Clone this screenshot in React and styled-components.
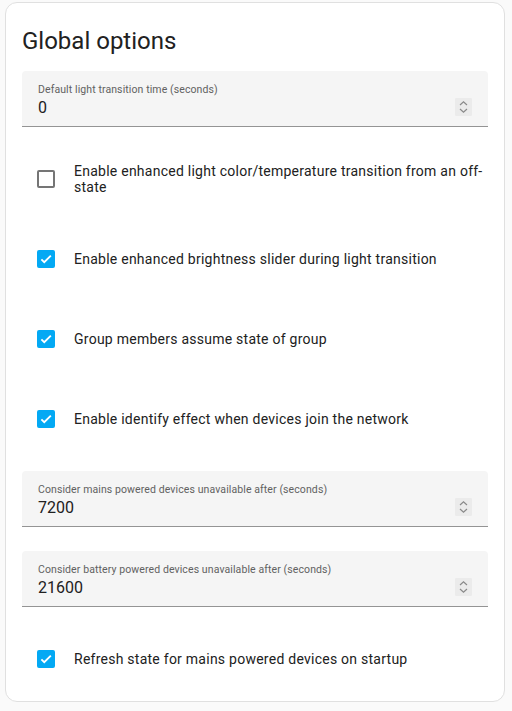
import React from "react";
import styled, { createGlobalStyle } from "styled-components";

const GlobalStyle = createGlobalStyle`
  html, body {
    margin: 0;
    padding: 0;
    background: #fafafa;
    font-family: Roboto, "Noto Sans", sans-serif;
    -webkit-font-smoothing: antialiased;
  }
`;

const Page = styled.div`
  padding: 2px 7px 8px 5px;
`;

const Card = styled.div`
  background: #ffffff;
  border: 1px solid #e0e0e0;
  border-radius: 12px;
  padding: 0 16px 2px 16px;
  display: flex;
  flex-direction: column;
`;

const Title = styled.h1`
  margin: 0;
  padding: 22px 0 2px 0;
  font-size: 24px;
  font-weight: 400;
  line-height: 32px;
  color: #212121;
`;

const Field = styled.div`
  position: relative;
  margin: 12px 0;
  height: 55px;
  background: #f5f5f5;
  border-radius: 4px 4px 0 0;
  border-bottom: 1px solid #949494;
  padding: 0 16px;
  display: flex;
  flex-direction: column;
  justify-content: flex-start;
`;

const FieldLabel = styled.div`
  margin-top: 13px;
  font-size: 10.5px;
  line-height: 12px;
  color: #616161;
  letter-spacing: 0.1px;
`;

const FieldValue = styled.div`
  margin-top: 2px;
  font-size: 16px;
  line-height: 20px;
  color: #212121;
`;

const Spinner = styled.div`
  position: absolute;
  right: 16px;
  top: 27px;
  width: 17px;
  height: 18px;
  background: #ebebeb;
  border-radius: 1px;
  display: flex;
  align-items: center;
  justify-content: center;
`;

const Row = styled.label`
  height: 80px;
  display: flex;
  align-items: center;
`;

const BoxWrap = styled.div`
  width: 40px;
  height: 40px;
  margin-left: 4px;
  flex-shrink: 0;
  display: flex;
  align-items: center;
  justify-content: center;
`;

const Box = styled.div`
  width: 18px;
  height: 18px;
  box-sizing: border-box;
  border-radius: 2px;
  border: 2px solid ${(p) => (p.checked ? "#03a9f4" : "#757575")};
  background: ${(p) => (p.checked ? "#03a9f4" : "transparent")};
  display: flex;
  align-items: center;
  justify-content: center;
`;

const RowText = styled.div`
  margin-left: 8px;
  padding-right: 2px;
  font-size: 14px;
  line-height: 16px;
  color: #212121;
  letter-spacing: 0.25px;
`;

const SpinIcon = () => (
  <svg width="9" height="14" viewBox="0 0 9 14">
    <path d="M1 5 L4.5 1.8 L8 5" fill="none" stroke="#8a8a8a" strokeWidth="1.2" />
    <path d="M1 9 L4.5 12.2 L8 9" fill="none" stroke="#8a8a8a" strokeWidth="1.2" />
  </svg>
);

const CheckMark = () => (
  <svg width="14" height="14" viewBox="0 0 24 24">
    <path d="M4.1 12.7 L9 17.6 L20.3 6.3" fill="none" stroke="#ffffff" strokeWidth="3.2" />
  </svg>
);

const NumberField = ({ label, value }) => (
  <Field>
    <FieldLabel>{label}</FieldLabel>
    <FieldValue>{value}</FieldValue>
    <Spinner>
      <SpinIcon />
    </Spinner>
  </Field>
);

const CheckRow = ({ checked, children }) => (
  <Row>
    <BoxWrap>
      <Box checked={checked}>{checked && <CheckMark />}</Box>
    </BoxWrap>
    <RowText>{children}</RowText>
  </Row>
);

export default function App() {
  return (
    <>
      <GlobalStyle />
      <Page>
        <Card>
          <Title>Global options</Title>
          <NumberField label="Default light transition time (seconds)" value="0" />
          <CheckRow checked={false}>
            Enable enhanced light color/temperature transition from an off-state
          </CheckRow>
          <CheckRow checked>Enable enhanced brightness slider during light transition</CheckRow>
          <CheckRow checked>Group members assume state of group</CheckRow>
          <CheckRow checked>Enable identify effect when devices join the network</CheckRow>
          <NumberField
            label="Consider mains powered devices unavailable after (seconds)"
            value="7200"
          />
          <NumberField
            label="Consider battery powered devices unavailable after (seconds)"
            value="21600"
          />
          <CheckRow checked>Refresh state for mains powered devices on startup</CheckRow>
        </Card>
      </Page>
    </>
  );
}
